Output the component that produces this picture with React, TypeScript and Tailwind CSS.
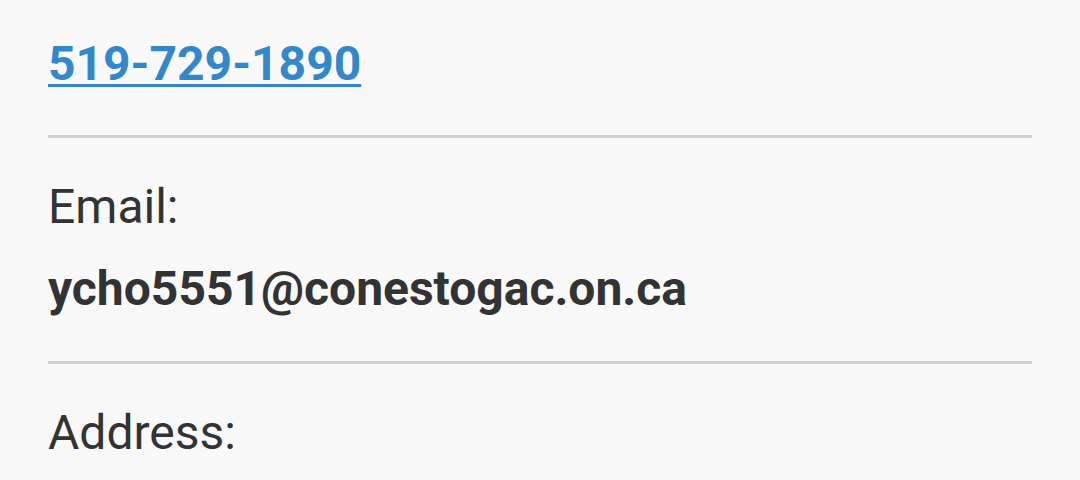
type Detail = {
  label: string;
  value: string;
  href?: string;
};

const details: Detail[] = [
  { label: 'Email:', value: 'ycho5551@conestogac.on.ca' },
  { label: 'Address:', value: '' },
];

export default function App() {
  return (
    <div className="h-screen overflow-hidden bg-[#f9f9f9] px-12 font-['Roboto',sans-serif] text-[48px] leading-[56px] text-[#333333]">
      <div className="pt-9 pb-[43px]">
        <a
          href="tel:519-729-1890"
          className="font-bold text-[#3388cc] underline decoration-[3px] underline-offset-[4px]"
        >
          519-729-1890
        </a>
      </div>

      {details.map((item) => (
        <div key={item.label} className="border-t-[3px] border-[#d1d1d1] pt-[41px] pb-11 flex flex-col gap-[26px]">
          <span>{item.label}</span>
          {item.value && <span className="font-bold">{item.value}</span>}
        </div>
      ))}
    </div>
  );
}
